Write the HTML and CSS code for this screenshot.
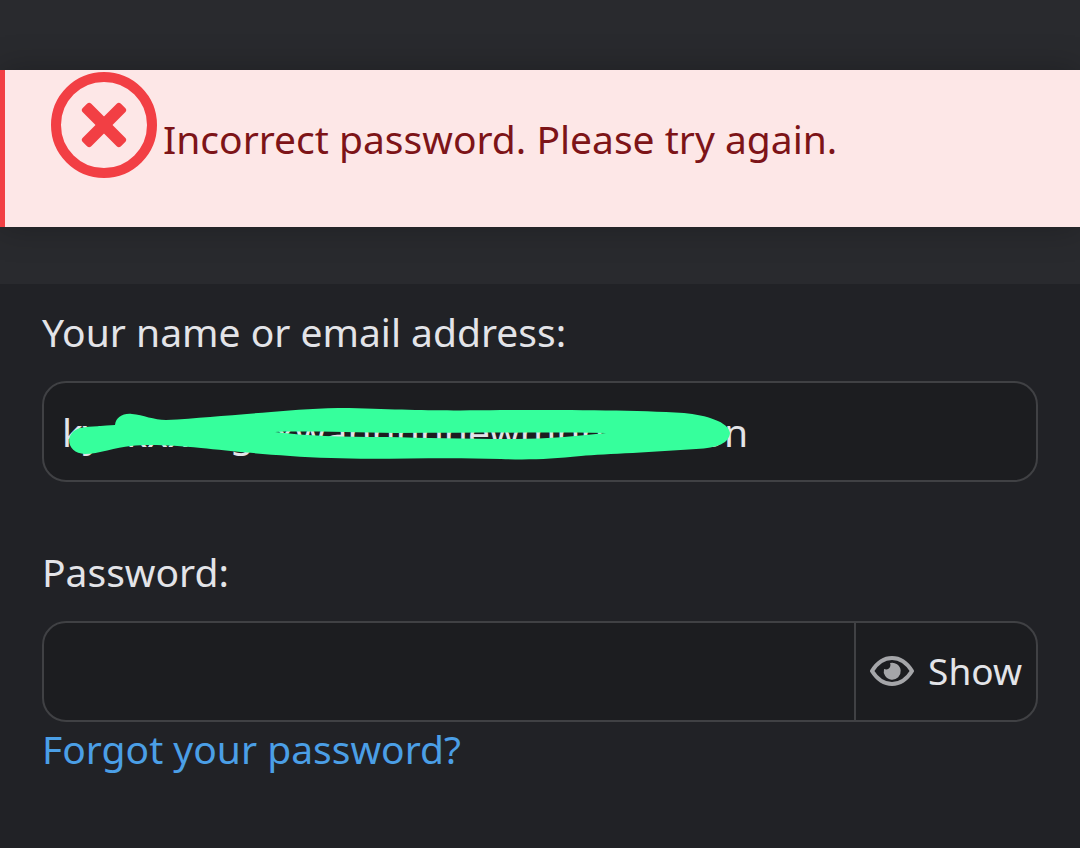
FILE: index.html
```
<!DOCTYPE html>
<html lang="en">
<head>
    <meta charset="UTF-8">
    <meta name="viewport" content="width=device-width, initial-scale=1.0">
    <title>Log in</title>
    <link rel="stylesheet" href="styles.css">
</head>
<body>
    <div class="alert" role="alert">
        <svg class="alert-icon" viewBox="0 0 106 106" aria-hidden="true">
            <circle cx="53" cy="53" r="48" fill="none" stroke="currentColor" stroke-width="10"/>
            <g fill="currentColor" transform="rotate(45 53 53)">
                <rect x="26" y="47" width="54" height="12" rx="3"/>
                <rect x="47" y="26" width="12" height="54" rx="3"/>
            </g>
        </svg>
        <p class="alert-text">Incorrect password. Please try again.</p>
    </div>

    <form class="login">
        <div class="field">
            <label for="login">Your name or email address:</label>
            <div class="input-group">
                <input type="text" id="login" value="kyokxxxxgxxwannnnnewmnnnnnoon">
                <svg class="marker" viewBox="0 0 664 54" aria-hidden="true">
                    <path fill-rule="evenodd" d="M14 21C25 19 38 19 49 18C50 10 57 6 66 7C77 8 88 13 100 13C135 11 165 8 205 5C230 3 253 1 283 1C345 3 380 4 435 3C510 3 570 3 618 6C640 8 663 15 664 26C663 36 652 41 630 42C590 45 540 47 515 49C485 52 465 53 435 52C370 50 310 53 265 51C210 49 165 44 135 41C105 38 82 37 65 39C50 40 32 47 19 47C1 47 -3 26 14 21ZM209 25C230 24 280 25 330 26C410 26 480 25 540 26C510 29 480 32 450 32C400 32 360 31 320 30C275 30 240 29 209 25Z"/>
                </svg>
            </div>
        </div>

        <div class="field">
            <label for="password">Password:</label>
            <div class="input-group">
                <input type="password" id="password">
                <button type="button" class="show-btn" id="showBtn">
                    <svg class="eye" viewBox="0 0 44 30" aria-hidden="true">
                        <path d="M2 15C7 7 14 2 22 2s15 5 20 13c-5 8-12 13-20 13S7 23 2 15z" fill="none" stroke="currentColor" stroke-width="4" stroke-linejoin="round"/>
                        <path d="M20 7a8.500 8.500 0 1 1-6 6c3 1 5 0 6-2 .6-1.500.5-3 0-4z" fill="currentColor"/>
                    </svg>
                    <span>Show</span>
                </button>
            </div>
            <a class="forgot" href="#">Forgot your password?</a>
        </div>
    </form>

    <script>
        const password = document.getElementById('password');
        const showBtn = document.getElementById('showBtn');

        showBtn.addEventListener('click', () => {
            const hidden = password.type === 'password';
            password.type = hidden ? 'text' : 'password';
            showBtn.querySelector('span').textContent = hidden ? 'Hide' : 'Show';
        });
    </script>
</body>
</html>
```

FILE: styles.css
```
* {
    box-sizing: border-box;
    margin: 0;
    padding: 0;
}

body {
    min-height: 100vh;
    display: flex;
    flex-direction: column;
    padding-top: 70px;
    font-family: "Noto Sans", sans-serif;
    font-size: 39px;
    line-height: 54px;
    background-color: #292a2e;
    color: #e3e4e8;
}

.alert {
    display: flex;
    align-items: flex-start;
    gap: 6px;
    padding: 2px 46px 49px;
    border-left: 5px solid #f23f44;
    background-color: #fde7e7;
    color: #7d1418;
    box-shadow: 0 0 32px rgba(0, 0, 0, 0.25);
}

.alert-icon {
    flex: none;
    width: 106px;
    height: 106px;
    color: #f23f44;
}

.alert-text {
    padding-top: 40px;
}

.login {
    flex: 1;
    display: flex;
    flex-direction: column;
    gap: 63px;
    margin-top: 57px;
    padding: 21px 42px;
    background-color: #212226;
    position: relative;
}

.field {
    display: flex;
    flex-direction: column;
}

.input-group {
    position: relative;
    display: flex;
    height: 101px;
    margin-top: 22px;
    border: 2px solid #404144;
    border-radius: 24px;
    background-color: #1c1d20;
    overflow: hidden;
}

input {
    flex: 1;
    min-width: 0;
    padding: 0 18px;
    border: none;
    outline: none;
    background: none;
    font: inherit;
    color: inherit;
}

/* marker stroke over the typed name */
.marker {
    position: absolute;
    top: 24px;
    left: 22px;
    width: 664px;
    height: 54px;
    fill: #36ff9c;
}

.show-btn {
    display: flex;
    align-items: center;
    gap: 14px;
    padding: 0 14px 2px;
    border: none;
    border-left: 2px solid #404144;
    background: none;
    font: inherit;
    font-size: 37px;
    color: inherit;
    cursor: pointer;
}

.eye {
    width: 44px;
    height: 30px;
    color: #a5a6a9;
}

.forgot {
    align-self: flex-start;
    color: #4b9fe6;
    text-decoration: none;
}
```
